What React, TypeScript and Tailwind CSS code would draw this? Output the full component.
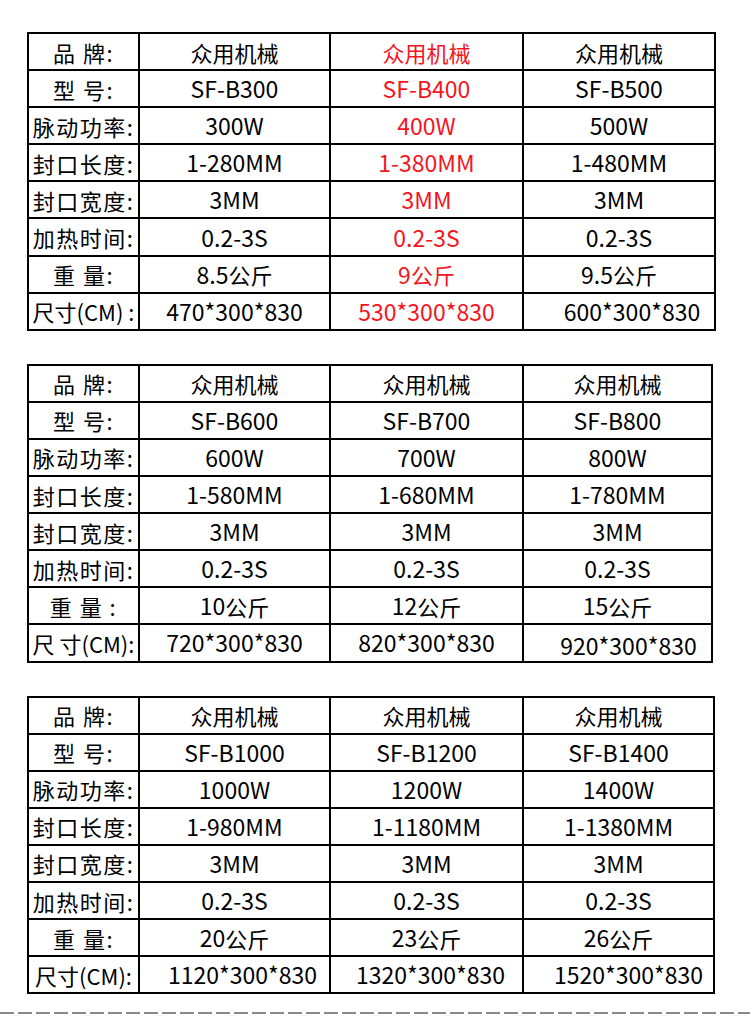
import React from 'react';

type Cell = { text: string; red?: boolean; shift?: string };

interface SpecTable {
  labels: string[];
  cols: Cell[][];
}

const mk = (arr: string[], red = false): Cell[] => arr.map((text) => ({ text, red }));

const tables: SpecTable[] = [
  {
    labels: ['品 牌:', '型 号:', '脉动功率:', '封口长度:', '封口宽度:', '加热时间:', '重 量:', '尺寸(CM) :'],
    cols: [
      mk(['众用机械', 'SF-B300', '300W', '1-280MM', '3MM', '0.2-3S', '8.5公斤', '470*300*830']),
      mk(['众用机械', 'SF-B400', '400W', '1-380MM', '3MM', '0.2-3S', '9公斤', '530*300*830'], true),
      mk(['众用机械', 'SF-B500', '500W', '1-480MM', '3MM', '0.2-3S', '9.5公斤', '600*300*830']),
    ],
  },
  {
    labels: ['品 牌:', '型 号:', '脉动功率:', '封口长度:', '封口宽度:', '加热时间:', '重 量 :', '尺 寸(CM):'],
    cols: [
      mk(['众用机械', 'SF-B600', '600W', '1-580MM', '3MM', '0.2-3S', '10公斤', '720*300*830']),
      mk(['众用机械', 'SF-B700', '700W', '1-680MM', '3MM', '0.2-3S', '12公斤', '820*300*830']),
      mk(['众用机械', 'SF-B800', '800W', '1-780MM', '3MM', '0.2-3S', '15公斤', '920*300*830']),
    ],
  },
  {
    labels: ['品 牌:', '型 号:', '脉动功率:', '封口长度:', '封口宽度:', '加热时间:', '重 量:', '尺寸(CM):'],
    cols: [
      mk(['众用机械', 'SF-B1000', '1000W', '1-980MM', '3MM', '0.2-3S', '20公斤', '1120*300*830']),
      mk(['众用机械', 'SF-B1200', '1200W', '1-1180MM', '3MM', '0.2-3S', '23公斤', '1320*300*830']),
      mk(['众用机械', 'SF-B1400', '1400W', '1-1380MM', '3MM', '0.2-3S', '26公斤', '1520*300*830']),
    ],
  },
];

// small nudges where the original text sits off-centre
tables[0].cols[2][7].shift = 'pl-[26px]';
tables[1].cols[2][7].shift = 'pl-[22px] pt-[6px]';
tables[2].cols[0][7].shift = 'pl-[16px]';
tables[2].cols[1][7].shift = 'pl-[8px]';
tables[2].cols[2][7].shift = 'pl-[20px]';

// latin runs are set a touch larger than the chinese ones
function Mixed({ text }: { text: string }) {
  const parts = text.split(/([\u4e00-\u9fff]+)/).filter(Boolean);
  return (
    <>
      {parts.map((p, i) =>
        /[\u4e00-\u9fff]/.test(p) ? (
          <span key={i}>{p}</span>
        ) : (
          <span key={i} className="text-[23px]">
            {p}
          </span>
        ),
      )}
    </>
  );
}

function Table({ data, width }: { data: SpecTable; width: string }) {
  return (
    <div className={`ml-[27px] ${width} border-2 border-black`}>
      {data.labels.map((label, r) => (
        <div
          key={r}
          className={`grid grid-cols-[109px_191px_193px_1fr] h-[35.1px] ${r > 0 ? 'border-t-2 border-black box-content' : ''}`}
        >
          <div className={`flex items-center justify-center whitespace-pre ${r < 7 ? 'tracking-[1.5px]' : ''}`}>
            {label}
          </div>
          {data.cols.map((col, c) => (
            <div
              key={c}
              className={`flex items-center justify-center border-l-2 border-black whitespace-pre ${col[r].shift ?? ''} ${
                col[r].red ? 'text-[#f5141e]' : ''
              }`}
            >
              <Mixed text={col[r].text} />
            </div>
          ))}
        </div>
      ))}
    </div>
  );
}

export default function App() {
  return (
    <div
      className="w-[750px] h-[1024px] bg-white text-black text-[22px] leading-none pt-[32px] overflow-hidden"
      style={{ fontFamily: '"Noto Sans CJK SC", "Noto Sans", sans-serif' }}
    >
      <Table data={tables[0]} width="w-[689px]" />
      <div className="h-[33px]" />
      <Table data={tables[1]} width="w-[686px]" />
      <div className="h-[33px]" />
      <Table data={tables[2]} width="w-[688px]" />
      <div className="mt-[18px] h-[2px] w-full bg-[repeating-linear-gradient(90deg,#8a8a8a_0_14px,transparent_14px_18px)]" />
    </div>
  );
}
